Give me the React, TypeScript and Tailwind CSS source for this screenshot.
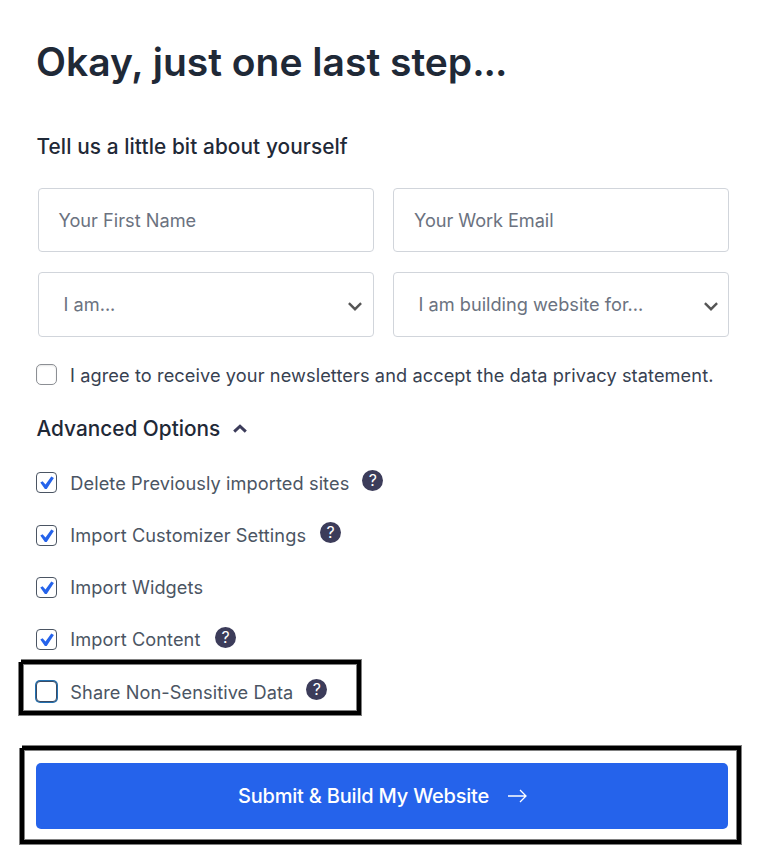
import React from "react";

const Check = ({ on, focus }: { on?: boolean; focus?: boolean }) => (
  <span className={`flex h-[21px] w-[21px] shrink-0 items-center justify-center border bg-white ${focus ? "rounded-[4px] border-[#3b4a63] ring-1 ring-[#2271b1]" : on ? "rounded-[4px] border-[#4b5563]" : "rounded-[5px] border-[#8c8f94] shadow-[inset_0_1px_2px_rgba(0,0,0,0.1)]"}`}>
    {on && (
      <svg viewBox="0 0 14 14" className="ml-px h-[14px] w-[14px] shrink-0 fill-[#2563eb]">
        <path d="M.3 6.6 2.6 5.3 5.5 8.6 11.3.6 13.9 1.9 6.7 12.9H4.9Z" />
      </svg>
    )}
  </span>
);

const Help = ({ shift }: { shift?: string }) => (
  <span className={`flex h-[21px] w-[21px] items-center justify-center rounded-full bg-[#3c3c5a] text-[16px] leading-[21px] font-normal text-white ${shift ?? "-mt-[2px] ml-[13px]"}`}>?</span>
);

type OptionProps = { label: string; help?: boolean; on?: boolean; shift?: string; raised?: boolean };

const Option = ({ label, help, on = true, shift, raised }: OptionProps) => (
  <div className="flex h-[52px] items-start first:h-[53px]">
    <Check on={on} focus={!on} />
    <span className={`ml-[13.3px] whitespace-nowrap text-[18.2px] leading-[21px] tracking-[0.08px] text-[#4b5563] ${raised ? "" : "mt-px"}`}>{label}</span>
    {help && <Help shift={shift} />}
  </div>
);

const Chevron = () => (
  <svg viewBox="0 0 14 9" className="mt-[3px] h-[9px] w-[14px] fill-none stroke-[#555] stroke-[2.4]">
    <path d="M.9 1.2 7 7.2l6.1-6" />
  </svg>
);

const field = "flex items-center rounded-[4px] border border-[#d1d5db] text-[18.2px] text-[#6b7280] whitespace-nowrap";
const frame = "relative border-4 border-black shadow-[0_0_0_1px_#808080,inset_0_0_0_1px_#808080]";

const Notch = () => <span className="absolute -top-[5px] -left-[5px] h-[3px] w-[3px] bg-white" />;

export default function App() {
  return (
    <main className="h-[866px] w-[763px] overflow-hidden bg-white pt-[36px] font-[Inter,sans-serif]">
      <h1 className="ml-[36px] h-[52px] whitespace-nowrap text-[39px] leading-[52px] font-semibold text-[#1f2937]">Okay, just one last step<span className="tracking-[-1px]">...</span></h1>
      <h2 className="mt-[44px] ml-[36.5px] h-[30px] whitespace-nowrap text-[20.8px] leading-[30px] font-medium tracking-[0.09px] text-[#1f2937]">Tell us a little bit about yourself</h2>
      <div className="mt-[26px] ml-[38px] grid w-[691px] grid-cols-2 grid-rows-[64px_65px] gap-x-[19px] gap-y-[20px]">
        <div className={`${field} pt-[2px] pl-[19.5px]`}>Your First Name</div>
        <div className={`${field} pt-[2px] pl-[20px] tracking-[-0.07px]`}>Your Work Email</div>
        <div className={`${field} justify-between pt-px pr-[11px] pl-[24.5px]`}>I am...<Chevron /></div>
        <div className={`${field} justify-between pt-px pr-[10px] pl-[24.5px]`}>I am building website for...<Chevron /></div>
      </div>
      <div className="mt-[27px] ml-[36px] flex h-[29px] items-start">
        <Check />
        <span className="mt-px ml-[13px] whitespace-nowrap text-[18.2px] leading-[21px] tracking-[0.09px] text-[#374151]">I agree to receive your newsletters and accept the data privacy statement.</span>
      </div>
      <div className="mt-[21px] ml-[36.5px] flex h-[30px] items-center text-[20.8px] font-medium text-[#1f2937]">
        Advanced Options
        <svg viewBox="0 0 14 9" className="mb-px ml-[13px] h-[9px] w-[14px] fill-none stroke-[#3c3c5a] stroke-[3]"><path d="m1.2 7.6 5.8-5.4 5.8 5.4" /></svg>
      </div>
      <div className="ml-[36px] h-[216px] pt-[28px]">
        <Option label="Delete Previously imported sites" help />
        <Option label="Import Customizer Settings" help raised shift="-mt-[3px] ml-[14px]" />
        <Option label="Import Widgets" raised />
        <Option label="Import Content" help raised shift="-mt-[2px] ml-[14.5px]" />
      </div>
      <div className={`${frame} ml-[19px] h-[55px] w-[342px] pt-[17px] pl-[13px]`}>
        <div><Option label="Share Non-Sensitive Data" help on={false} /></div>
        <Notch />
      </div>
      <div className={`${frame} mt-[31px] ml-[20px] h-[98px] w-[721px] pt-[13px] pl-[12px]`}>
        <button className="flex h-[66px] w-[692px] items-center justify-center rounded-[5px] bg-[#2563eb] pl-[2px] text-[20px] font-medium tracking-[-0.2px] whitespace-nowrap text-white">
          Submit &amp; Build My Website
          <svg viewBox="0 0 20 14" className="ml-[19px] h-[14px] w-[20px] fill-none stroke-white stroke-[1.3]"><path d="M0 7h18M12 1l6 6-6 6" /></svg>
        </button>
        <Notch />
      </div>
    </main>
  );
}
